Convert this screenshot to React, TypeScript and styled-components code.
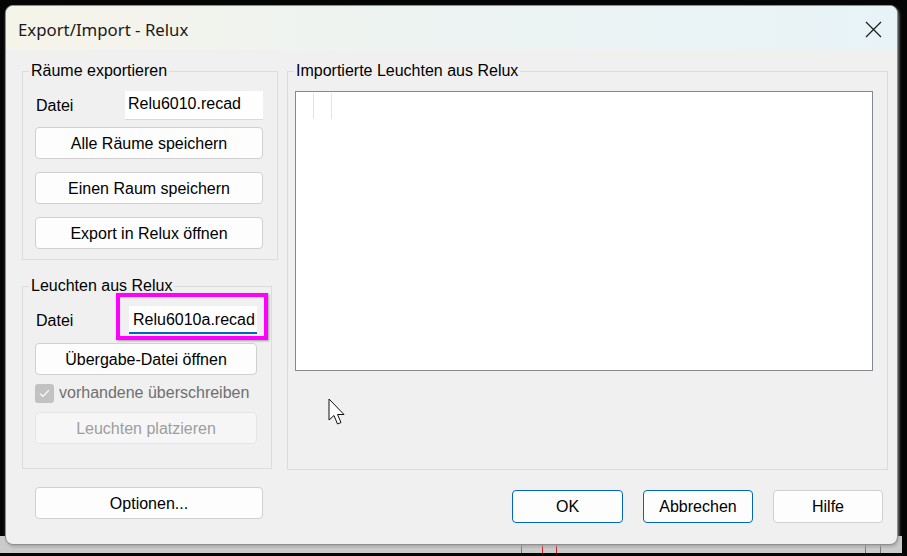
import React from "react";
import styled, { createGlobalStyle } from "styled-components";

const GlobalStyle = createGlobalStyle`
  html, body {
    margin: 0;
    padding: 0;
    background: #000;
  }
  body {
    font-family: "Liberation Sans", Arial, sans-serif;
    font-size: 16px;
    color: #000;
  }
`;

const Desktop = styled.div`
  position: relative;
  width: 907px;
  height: 556px;
  overflow: hidden;
  background: #050505;
`;

const BackWindow = styled.div`
  position: absolute;
  left: 0;
  right: 5px;
  top: 536px;
  height: 17px;
  background: #cbcbcb;
`;

const BackLine = styled.div<{ $x: number; $red?: boolean }>`
  position: absolute;
  top: 0;
  bottom: 0;
  left: ${({ $x }) => $x}px;
  width: 1px;
  background: ${({ $red }) => ($red ? "#d21f1f" : "#7a7a7a")};
`;

const Dialog = styled.div`
  position: relative;
  margin: 5px 0 0 5px;
  width: 893px;
  height: 540px;
  box-sizing: border-box;
  border: 1px solid #8e8e8e;
  border-radius: 8px;
  background: #f0f0f0;
  overflow: hidden;
  display: flex;
  flex-direction: column;
  box-shadow: 1px 2px 3px rgba(160, 160, 160, 0.8);
`;

const TitleBar = styled.div`
  height: 44px;
  flex: none;
  display: flex;
  align-items: center;
  justify-content: space-between;
  padding: 0 15px 0 12px;
  background: linear-gradient(90deg, #f6f4e9 0%, #eef3f1 40%, #e8f3f8 100%);
`;

const Title = styled.span`
  font-family: "Noto Sans", "Liberation Sans", sans-serif;
  font-size: 16.8px;
  color: #1a1a1a;
  margin-top: 2px;
`;

const CloseButton = styled.button`
  width: 17px;
  height: 17px;
  padding: 0;
  border: 0;
  background: transparent;
  display: flex;
  margin-top: 2px;
`;

const Body = styled.div`
  display: flex;
  gap: 9px;
  padding: 12px 9px 0 16px;
`;

const Column = styled.div`
  display: flex;
  flex-direction: column;
  gap: 17px;
  width: 256px;
`;

const Group = styled.fieldset<{ $w: number; $h: number }>`
  position: relative;
  margin: 0;
  padding: 0;
  min-width: 0;
  box-sizing: border-box;
  width: ${({ $w }) => $w}px;
  height: ${({ $h }) => $h}px;
  border: 1px solid #dcdcdc;
`;

const Legend = styled.legend`
  margin-left: 6px;
  padding: 0 2px;
  font-size: 16px;
  line-height: 18px;
`;

const GroupContent = styled.div<{ $left: number; $right: number }>`
  display: flex;
  flex-direction: column;
  padding: 11px ${({ $right }) => $right}px 0 ${({ $left }) => $left}px;
`;

const FileRow = styled.div<{ $label: number; $h: number }>`
  display: grid;
  grid-template-columns: ${({ $label }) => $label}px 1fr;
  align-items: center;
  height: ${({ $h }) => $h}px;
`;

const FieldLabel = styled.span`
  padding: 1px 0 0 1px;
  line-height: 18px;
`;

const InputWrap = styled.div`
  position: relative;
  height: 100%;
`;

const TextInput = styled.input<{ $focused?: boolean }>`
  box-sizing: border-box;
  width: 100%;
  height: 100%;
  margin: 0;
  border: 0;
  border-bottom: ${({ $focused }) => ($focused ? "2px solid #0067c0" : "1px solid #d9d9d9")};
  padding: ${({ $focused }) => ($focused ? "1px 0 0 4px" : "0 0 3px 3px")};
  background: #fff;
  font-family: "Liberation Sans", Arial, sans-serif;
  font-size: 16px;
  color: #000;
  outline: none;
`;

const Highlight = styled.span`
  position: absolute;
  left: -13px;
  top: -13px;
  right: -11px;
  bottom: -6px;
  border: 4px solid #ff00ff;
  box-shadow: 1px 1px 2px rgba(0, 0, 0, 0.35);
  pointer-events: none;
`;

const Button = styled.button<{ $w?: number; $h?: number; $mt?: number; $default?: boolean }>`
  box-sizing: border-box;
  width: ${({ $w }) => ($w ? `${$w}px` : "100%")};
  height: ${({ $h }) => $h ?? 32}px;
  margin: ${({ $mt }) => $mt ?? 0}px 0 0 0;
  padding: 1px 0 0;
  flex: none;
  border: 1px solid ${({ $default }) => ($default ? "#0067c0" : "#d0d0d0")};
  border-radius: 4px;
  background: #fdfdfd;
  font-family: "Liberation Sans", Arial, sans-serif;
  font-size: 16px;
  color: #000;

  &:disabled {
    background: #f6f6f6;
    border-color: #e6e6e6;
    color: #9d9d9d;
  }
`;

const CheckRow = styled.label`
  display: flex;
  align-items: center;
  gap: 5px;
  height: 20px;
  margin-top: 8px;
  color: #6f6f6f;
`;

const CheckBox = styled.span`
  width: 19px;
  height: 19px;
  border-radius: 3px;
  background: #c2c2c2;
  display: flex;
  align-items: center;
  justify-content: center;
`;

const ListBox = styled.div`
  box-sizing: border-box;
  height: 280px;
  border: 1px solid #838791;
  background: #fff;
  padding-top: 1px;
`;

const ListHeader = styled.div`
  display: flex;
  height: 26px;
`;

const HeaderCell = styled.div`
  width: 17px;
  border-right: 1px solid #e3e3e3;
`;

const Cursor = styled.svg`
  position: absolute;
  left: 40px;
  top: 318px;
`;

const Footer = styled.div`
  flex: 1;
  display: flex;
  align-items: flex-start;
  padding: 17px 14px 0 29px;
`;

const Spacer = styled.div`
  flex: 1;
`;

const DialogButtons = styled.div`
  display: flex;
  gap: 20px;
  margin-top: 3px;
`;

const App: React.FC = () => {
  return (
    <>
      <GlobalStyle />
      <Desktop>
        <BackWindow>
          <BackLine $x={521} />
          <BackLine $x={542} $red />
          <BackLine $x={556} $red />
          <BackLine $x={865} />
          <BackLine $x={880} />
        </BackWindow>
        <Dialog>
          <TitleBar>
            <Title>Export/Import - Relux</Title>
            <CloseButton type="button" aria-label="Schließen">
              <svg width="17" height="17" viewBox="0 0 17 17">
                <path d="M1 1 L16 16 M16 1 L1 16" stroke="#1a1a1a" strokeWidth="1.2" fill="none" />
              </svg>
            </CloseButton>
          </TitleBar>
          <Body>
            <Column>
              <Group $w={256} $h={198}>
                <Legend>Räume exportieren</Legend>
                <GroupContent $left={12} $right={14}>
                  <FileRow $label={90} $h={29}>
                    <FieldLabel>Datei</FieldLabel>
                    <InputWrap>
                      <TextInput defaultValue="Relu6010.recad" />
                    </InputWrap>
                  </FileRow>
                  <Button type="button" $mt={7}>Alle Räume speichern</Button>
                  <Button type="button" $mt={13}>Einen Raum speichern</Button>
                  <Button type="button" $mt={13}>Export in Relux öffnen</Button>
                </GroupContent>
              </Group>
              <Group $w={250} $h={192}>
                <Legend>Leuchten aus Relux</Legend>
                <GroupContent $left={12} $right={14}>
                  <FileRow $label={94} $h={28}>
                    <FieldLabel>Datei</FieldLabel>
                    <InputWrap>
                      <TextInput $focused defaultValue="Relu6010a.recad" />
                      <Highlight />
                    </InputWrap>
                  </FileRow>
                  <Button type="button" $mt={9}>Übergabe-Datei öffnen</Button>
                  <CheckRow>
                    <CheckBox>
                      <svg width="11" height="9" viewBox="0 0 11 9">
                        <path d="M1 4.6 L4 7.5 L10 1.2" stroke="#fff" strokeWidth="1.2" fill="none" />
                      </svg>
                    </CheckBox>
                    vorhandene überschreiben
                  </CheckRow>
                  <Button type="button" $mt={9} disabled>Leuchten platzieren</Button>
                </GroupContent>
              </Group>
            </Column>
            <Group $w={601} $h={408}>
              <Legend>Importierte Leuchten aus Relux</Legend>
              <GroupContent $left={7} $right={14}>
                <ListBox>
                  <ListHeader>
                    <HeaderCell />
                    <HeaderCell />
                  </ListHeader>
                </ListBox>
              </GroupContent>
              <Cursor width="19" height="29" viewBox="0 0 19 29">
                <path
                  d="M1 1 L1 22 L6 17.5 L9.5 26 L13 24.5 L9.5 16.5 L16 16.5 Z"
                  fill="#fff"
                  stroke="#111"
                  strokeWidth="1"
                  strokeLinejoin="round"
                />
              </Cursor>
            </Group>
          </Body>
          <Footer>
            <Button type="button" $w={228} $h={32}>Optionen...</Button>
            <Spacer />
            <DialogButtons>
              <Button type="button" $w={111} $h={33} $default>OK</Button>
              <Button type="button" $w={110} $h={33} $default>Abbrechen</Button>
              <Button type="button" $w={110} $h={33}>Hilfe</Button>
            </DialogButtons>
          </Footer>
        </Dialog>
      </Desktop>
    </>
  );
};

export default App;
